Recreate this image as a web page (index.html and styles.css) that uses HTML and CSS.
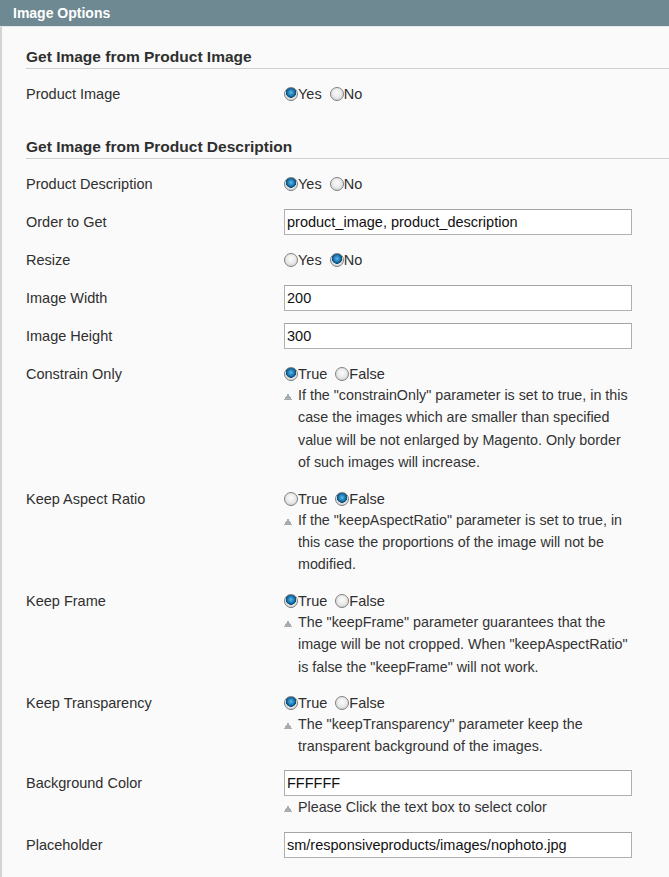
FILE: index.html
```html
<!DOCTYPE html>
<html lang="en">
<head>
  <meta charset="UTF-8" />
  <title>Image Options</title>
  <link rel="stylesheet" href="styles.css">
</head>
<body>

  <div class="entry-edit">
    <div class="entry-head">Image Options</div>

    <div class="fieldset">
      <h4 class="group-title">Get Image from Product Image</h4>
      <table class="form-list">
        <tr>
          <td class="label">Product Image</td>
          <td class="value">
            <label class="radio"><input type="radio" name="product_image" checked>Yes</label>
            <label class="radio"><input type="radio" name="product_image">No</label>
          </td>
        </tr>
      </table>

      <h4 class="group-title second">Get Image from Product Description</h4>
      <table class="form-list">
        <tr>
          <td class="label">Product Description</td>
          <td class="value">
            <label class="radio"><input type="radio" name="product_desc" checked>Yes</label>
            <label class="radio"><input type="radio" name="product_desc">No</label>
          </td>
        </tr>
        <tr>
          <td class="label">Order to Get</td>
          <td class="value"><input type="text" class="input-text" value="product_image, product_description"></td>
        </tr>
        <tr>
          <td class="label">Resize</td>
          <td class="value">
            <label class="radio"><input type="radio" name="resize">Yes</label>
            <label class="radio"><input type="radio" name="resize" checked>No</label>
          </td>
        </tr>
        <tr>
          <td class="label">Image Width</td>
          <td class="value"><input type="text" class="input-text" value="200"></td>
        </tr>
        <tr>
          <td class="label">Image Height</td>
          <td class="value"><input type="text" class="input-text" value="300"></td>
        </tr>
        <tr>
          <td class="label">Constrain Only</td>
          <td class="value">
            <label class="radio"><input type="radio" name="constrain" checked>True</label>
            <label class="radio"><input type="radio" name="constrain">False</label>
            <p class="note">If the "constrainOnly" parameter is set to true, in this case the images which are smaller than specified value will be not enlarged by Magento. Only border of such images will increase.</p>
          </td>
        </tr>
        <tr>
          <td class="label">Keep Aspect Ratio</td>
          <td class="value">
            <label class="radio"><input type="radio" name="aspect">True</label>
            <label class="radio"><input type="radio" name="aspect" checked>False</label>
            <p class="note">If the "keepAspectRatio" parameter is set to true, in this case the proportions of the image will not be modified.</p>
          </td>
        </tr>
        <tr>
          <td class="label">Keep Frame</td>
          <td class="value">
            <label class="radio"><input type="radio" name="frame" checked>True</label>
            <label class="radio"><input type="radio" name="frame">False</label>
            <p class="note">The "keepFrame" parameter guarantees that the image will be not cropped. When "keepAspectRatio" is false the "keepFrame" will not work.</p>
          </td>
        </tr>
        <tr>
          <td class="label">Keep Transparency</td>
          <td class="value">
            <label class="radio"><input type="radio" name="transparency" checked>True</label>
            <label class="radio"><input type="radio" name="transparency">False</label>
            <p class="note">The "keepTransparency" parameter keep the transparent background of the images.</p>
          </td>
        </tr>
        <tr>
          <td class="label">Background Color</td>
          <td class="value">
            <input type="text" class="input-text" value="FFFFFF">
            <p class="note after-input">Please Click the text box to select color</p>
          </td>
        </tr>
        <tr>
          <td class="label">Placeholder</td>
          <td class="value"><input type="text" class="input-text" value="sm/responsiveproducts/images/nophoto.jpg"></td>
        </tr>
      </table>
    </div>
  </div>

</body>
</html>
```

FILE: styles.css
```css
* {
  box-sizing: border-box;
}

body {
  margin: 0;
  font-family: "Liberation Sans", Arial, sans-serif;
  font-size: 14.5px;
  color: #2f2f2f;
  background: #fafafa;
}

.entry-head {
  height: 27px;
  line-height: 27px;
  padding-left: 13px;
  background: #6f8992;
  color: #fff;
  font-weight: bold;
  font-size: 14px;
  border-bottom: 1px solid #e4e8e9;
}

.fieldset {
  border-left: 2px solid #d3d3d3;
  padding: 1px 0 20px 24px;
  min-height: 850px;
}

.group-title {
  margin: 20px 0 6px;
  padding-bottom: 2px;
  font-size: 15.5px;
  line-height: 18px;
  color: #2f2f2f;
  border-bottom: 1px solid #cfcfcf;
}

.group-title.second {
  margin-top: 25px;
}

.form-list {
  border-collapse: collapse;
}

.form-list td {
  padding: 6px 0;
  vertical-align: top;
}

.form-list .label {
  width: 258px;
  line-height: 26px;
}

.form-list .value {
  width: 348px;
}

.radio {
  display: inline-flex;
  align-items: center;
  height: 26px;
  margin-right: 4px;
}

.radio input {
  appearance: none;
  -webkit-appearance: none;
  width: 14px;
  height: 14px;
  margin: 0;
  border: 1px solid #7f8183;
  border-radius: 50%;
  background: radial-gradient(circle at 50% 40%, #fdfdfd 0%, #e6e6e6 55%, #c4c4c4 100%);
}

.radio input:checked {
  background:
    radial-gradient(circle at 50% 38%, #63b8e4 0%, #1d7db8 32%, #0b4a75 52%, transparent 57%),
    radial-gradient(circle at 50% 40%, #fdfdfd 0%, #e6e6e6 55%, #c4c4c4 100%);
}

.input-text {
  display: block;
  width: 348px;
  height: 26px;
  padding: 0 2px;
  border: 1px solid #b0b0b0;
  border-top-color: #a4a4a4;
  background: #fff;
  font-family: "Liberation Sans", Arial, sans-serif;
  font-size: 14.5px;
  color: #111;
}

.note {
  margin: -3px 0 0;
  padding-left: 14px;
  line-height: 22.4px;
  font-size: 14.3px;
  color: #333;
}

.note::before {
  content: "";
  display: inline-block;
  width: 14px;
  margin-left: -14px;
  height: 7px;
  background:
    conic-gradient(from 150deg at 4px 0, #a5adb1 60deg, transparent 0) 0 0 / 8px 7px no-repeat;
}

.note.after-input {
  margin-top: 0;
  margin-bottom: 2px;
}
```
